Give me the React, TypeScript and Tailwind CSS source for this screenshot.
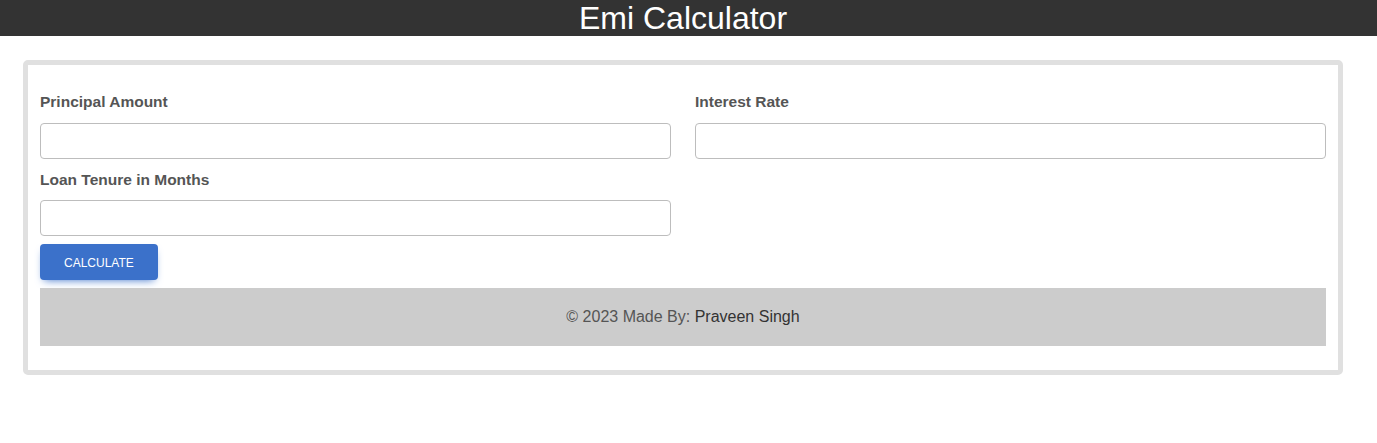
export default function App() {
  const font = { fontFamily: '"Liberation Sans", Arial, sans-serif' };
  return (
    <div className="min-h-[443px] w-full bg-white" style={font}>
      <header className="h-9 w-full bg-[#333333]">
        <div className="w-[1366px]">
          <h1 className="m-0 text-center text-[32px] leading-9 font-normal text-white">Emi Calculator</h1>
        </div>
      </header>
      <div className="w-[1366px] px-[23px] pt-6">
        <div className="rounded-[5px] border-[5px] border-[#e0e0e0] bg-white px-3 pt-[28px] pb-6">
          <div className="grid grid-cols-2 gap-x-6 gap-y-[11px]">
            <div className="flex flex-col">
              <label className="mb-3 block text-[15.5px] leading-[18px] font-bold text-[#555555]">Principal Amount</label>
              <input type="text" className="h-9 w-full rounded-[4px] border border-[#bdbdbd] bg-white px-3 outline-none" />
            </div>
            <div className="flex flex-col">
              <label className="mb-3 block text-[15.5px] leading-[18px] font-bold text-[#555555]">Interest Rate</label>
              <input type="text" className="h-9 w-full rounded-[4px] border border-[#bdbdbd] bg-white px-3 outline-none" />
            </div>
            <div className="flex flex-col">
              <label className="mt-[1px] mb-[11px] block text-[15.5px] leading-[18px] font-bold text-[#555555]">Loan Tenure in Months</label>
              <input type="text" className="h-9 w-full rounded-[4px] border border-[#bdbdbd] bg-white px-3 outline-none" />
            </div>
          </div>
          <button className="mt-2 flex h-9 items-center rounded-[4px] bg-[#3b71ca] px-6 pt-[2px] text-[12px] font-medium text-white uppercase shadow-[0_4px_9px_-4px_#3b71ca]">
            Calculate
          </button>
          <footer className="mt-2 flex h-[58px] items-center justify-center bg-[#cccccc] text-[16px] text-[#555555]">
            <span>
              © 2023 Made By: <span className="text-[#333333]">Praveen Singh</span>
            </span>
          </footer>
        </div>
      </div>
    </div>
  );
}
